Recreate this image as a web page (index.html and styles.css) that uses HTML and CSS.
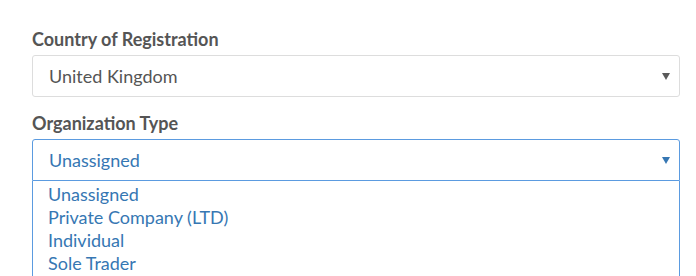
FILE: index.html
```html
<!DOCTYPE html>
<html>
<head>
<meta charset="utf-8">
<link rel="stylesheet" href="styles.css">
</head>
<body>
<div class="form">
  <div class="field">
    <div class="label">Country of Registration</div>
    <div class="select">
      <span class="value">United Kingdom</span>
      <span class="caret"></span>
    </div>
  </div>
  <div class="field">
    <div class="label">Organization Type</div>
    <div class="select focus">
      <span class="value">Unassigned</span>
      <span class="caret"></span>
    </div>
    <ul class="options">
      <li>Unassigned</li>
      <li>Private Company (LTD)</li>
      <li>Individual</li>
      <li>Sole Trader</li>
    </ul>
  </div>
</div>
</body>
</html>
```
FILE: styles.css
```css
html, body {
  margin: 0;
  padding: 0;
  background: #fff;
}
body {
  font-family: Lato, "Open Sans", sans-serif;
  height: 276px;
  overflow: hidden;
}
.form {
  padding: 27px 16px 0 32px;
  display: flex;
  flex-direction: column;
  gap: 14px;
}
.field {
  display: flex;
  flex-direction: column;
}
.label {
  font-size: 18px;
  line-height: 24px;
  font-weight: 700;
  color: #555;
  margin-bottom: 4px;
}
.select {
  height: 42px;
  box-sizing: border-box;
  border: 1px solid #ddd;
  border-radius: 3px;
  display: flex;
  align-items: center;
  justify-content: space-between;
  padding: 0 9px 0 16px;
  font-size: 18px;
  color: #555;
}
.select.focus {
  border-color: #5b9be0;
  color: #3677b3;
  border-radius: 3px 3px 0 0;
}
.caret {
  width: 0;
  height: 0;
  border-left: 4px solid transparent;
  border-right: 4px solid transparent;
  border-top: 7px solid #5a5a5a;
}
.focus .caret {
  border-top-color: #3677b3;
}
.options {
  list-style: none;
  margin: 0;
  padding: 2px 0 0 15px;
  border-left: 1px solid #5b9be0;
  border-right: 1px solid #5b9be0;
  font-size: 18px;
  line-height: 23px;
  color: #3677b3;
  height: 95px;
  box-sizing: border-box;
  overflow: hidden;
}
```
